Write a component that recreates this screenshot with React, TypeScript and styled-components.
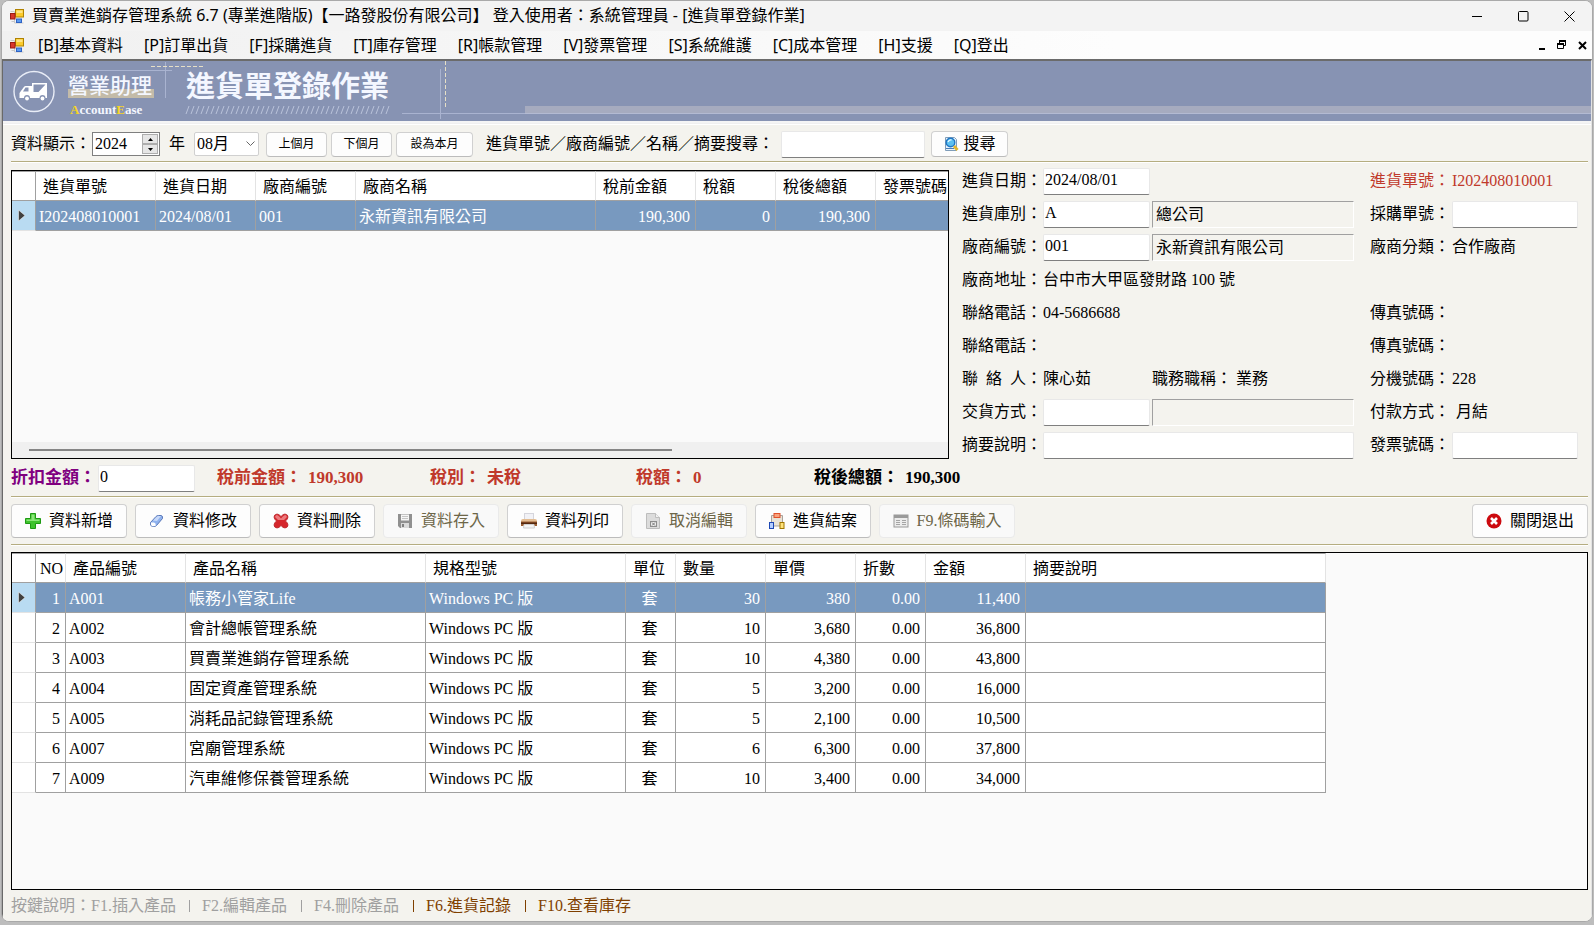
import React from 'react';
import styled, { createGlobalStyle, css } from 'styled-components';

const uiFont = '"Noto Sans", "Noto Sans CJK TC", sans-serif';
const formFont = '"Liberation Serif", "Noto Sans CJK TC", serif';

const color = {
  surface: '#f4f3ee',
  banner: '#8793b3',
  rule: '#b5ad80',
  grid: '#a0a0a0',
  selected: '#7899bf',
  red: '#c0392b',
  purple: '#800080',
  brown: '#804000',
  muted: '#a0a0a0',
};

const GlobalStyle = createGlobalStyle`
  *, *::before, *::after { box-sizing: border-box; }
  body { margin: 0; background: #bdbdbd; }
  button, input, select { font: inherit; color: inherit; margin: 0; }
`;

const Window = styled.div`
  display: flex;
  flex-direction: column;
  min-height: calc(100vh - 3px);
  margin: 0 1px;
  border: 1px solid #a9a9a9;
  border-radius: 8px;
  overflow: hidden;
  background: #f3f3f3;
  font: 400 16px/20px ${formFont};
  color: #000;
`;

const TitleBar = styled.header`
  display: flex;
  align-items: center;
  height: 30px;
  padding-left: 8px;
  font: 400 16px/20px ${uiFont};
  background: #f3f3f3;
`;

const TitleText = styled.h1`
  flex: 1;
  margin: 0 0 0 7px;
  padding-bottom: 2px;
  font: inherit;
  white-space: pre;
`;

const CaptionButtons = styled.div`
  display: flex;
`;

const CaptionButton = styled.button<{ $small?: boolean }>`
  display: flex;
  align-items: center;
  justify-content: center;
  width: ${p => (p.$small ? 20 : 46)}px;
  height: ${p => (p.$small ? 20 : 30)}px;
  padding: 0;
  border: 0;
  background: transparent;
`;

const MenuBar = styled.nav`
  display: flex;
  align-items: center;
  height: 28px;
  padding-left: 8px;
  background: linear-gradient(90deg, #f0f0f0, #fdfdfd 70%);
  font: 400 16px/20px ${uiFont};
`;

const MenuList = styled.ul`
  flex: 1;
  display: flex;
  gap: 21px;
  margin: 0 0 0 13px;
  padding: 0;
  list-style: none;
`;

const MenuLink = styled.a`
  color: #000;
  text-decoration: none;
  white-space: nowrap;
`;

const Workspace = styled.div`
  flex: 1;
  display: flex;
  flex-direction: column;
  border-top: 2px solid #6b6b6b;
  border-left: 1px solid #696969;
  border-right: 1px solid #e3e3e3;
  background: ${color.surface};
`;

const Banner = styled.div`
  position: relative;
  display: flex;
  height: 60px;
  background: ${color.banner};
  color: #f4f7ff;

  &::after {
    content: '';
    position: absolute;
    left: 522px;
    right: 0;
    bottom: 7px;
    height: 8px;
    background: #a6abbf;
    border-bottom: 1px solid #b3bad2;
  }
`;

const BannerArt = styled.svg`
  position: absolute;
  left: 0;
  top: 0;
`;

const Brand = styled.div`
  position: relative;
  width: 86px;
  margin-left: 65px;
  padding-top: 13px;
`;

const BrandName = styled.div`
  font-size: 21px;
  line-height: 24px;
  font-weight: 500;
  white-space: nowrap;
  background: linear-gradient(transparent 15px, #c3bba9 15px);
`;

const BrandSub = styled.div`
  padding: 4px 0 0 2px;
  font: bold 13px/15px "Liberation Serif", serif;

  b { color: #f5d327; }
`;

const BannerTitle = styled.h2`
  position: relative;
  margin: 0 0 0 32px;
  padding-top: 10px;
  font: bold 29px/32px ${formFont};
  white-space: nowrap;
`;

const Edge = styled.div`
  height: 4px;
  background: #f0f0f0;
  border-top: 2px solid #f5f5f5;
  border-bottom: 1px solid #fff;
`;

const Content = styled.main`
  flex: 1;
  display: flex;
  flex-direction: column;
  padding: 0 3px 0 8px;
`;

const Rule = styled.hr`
  flex: none;
  width: 100%;
  height: 2px;
  margin: 0;
  border: 0;
  border-top: 1px solid ${color.rule};
  background: #fff;
`;

const FilterBar = styled.form`
  display: flex;
  align-items: center;
  height: 36px;
  padding-top: 2px;
`;

const FilterLabel = styled.label<{ $gap?: number }>`
  margin: 0 ${p => p.$gap ?? 0}px;
  white-space: nowrap;
`;

const Spinner = styled.div`
  display: flex;
  width: 68px;
  height: 24px;
  margin-left: 1px;
  border: 1px solid #7f7f7f;
  background: #fff;
`;

const YearInput = styled.input`
  flex: 1;
  min-width: 0;
  padding: 0 0 0 2px;
  border: 0;
  background: transparent;
  appearance: textfield;

  &::-webkit-inner-spin-button { appearance: none; }
`;

const SpinButtons = styled.div`
  display: flex;
  flex-direction: column;
  width: 18px;
  padding: 1px;
`;

const SpinButton = styled.button`
  flex: 1;
  display: flex;
  align-items: center;
  justify-content: center;
  padding: 0;
  border: 1px solid #adadad;
  background: #e6e6e6;
`;

const SelectWrap = styled.div`
  display: grid;
  align-items: center;
  width: 65px;
  height: 24px;

  > * { grid-area: 1 / 1; }
  svg { justify-self: end; margin-right: 4px; pointer-events: none; }
`;

const MonthSelect = styled.select`
  width: 100%;
  height: 100%;
  padding: 0 0 0 2px;
  border: 1px solid #d0d0d0;
  border-radius: 2px;
  background: #fff;
  appearance: none;
`;

const MonthButtons = styled.div`
  display: flex;
  gap: 4px;
  margin: 0 13px 0 7px;
`;

const Button = styled.button<{ $kind: 'mini' | 'search' | 'action'; $wide?: boolean }>`
  display: flex;
  align-items: center;
  justify-content: center;
  padding: 0;
  white-space: nowrap;
  background: #fdfdfd;
  border: 1px solid #d0d0d0;
  border-bottom-color: #bcbcbc;
  border-radius: 4px;

  ${p => p.$kind === 'mini' && css`
    width: ${p.$wide ? 77 : 61}px;
    height: 25px;
    font-size: 12px;
  `}
  ${p => p.$kind === 'search' && css`
    width: 77px;
    height: 26px;
    gap: 5px;
  `}
  ${p => p.$kind === 'action' && css`
    width: ${p.$wide ? 136 : 116}px;
    height: 34px;
    gap: 8px;
  `}

  &:disabled {
    color: #6d6648;
    background: #f9f9f9;
    border-color: #eaeaea;
  }
`;

const TextInput = styled.input<{ $width?: number }>`
  width: ${p => (p.$width ? `${p.$width}px` : '100%')};
  height: 27px;
  padding: 0 1px 3px;
  border: 1px solid #e8e8e8;
  border-bottom-color: #7f7f7f;
  border-radius: 2px;
  background: #fff;
`;

const SearchInput = styled(TextInput)`
  margin: 0 6px 0 7px;
`;

const Upper = styled.div`
  display: grid;
  grid-template-columns: minmax(0, 938fr) minmax(0, 626fr);
  column-gap: 13px;
  height: 299px;
`;

const GridBox = styled.div<{ $fill?: boolean }>`
  display: flex;
  flex-direction: column;
  min-width: 0;
  border: 1px solid #000;
  background: #fafafa;
  overflow: hidden;
  ${p => (p.$fill ? 'flex: 1; margin-top: 6px;' : 'height: 289px; margin-top: 7px;')}
`;

const Table = styled.table<{ $width: number }>`
  width: ${p => p.$width}px;
  table-layout: fixed;
  border-collapse: separate;
  border-spacing: 0;
`;

const HeadCell = styled.th<{ $corner?: boolean }>`
  height: 30px;
  padding: 2px 0 0 7px;
  border-top: 1px solid ${color.grid};
  border-bottom: 1px solid ${color.grid};
  border-right: 1px solid ${p => (p.$corner ? color.grid : '#e3e3e3')};
  background: #fff;
  font-weight: inherit;
  text-align: left;
  white-space: nowrap;
`;

const NumberHead = styled(HeadCell)`
  padding-left: 4px;
`;

const Row = styled.tr<{ $selected?: boolean }>`
  background: ${p => (p.$selected ? color.selected : '#fff')};
  color: ${p => (p.$selected ? '#fff' : '#000')};
`;

const Cell = styled.td<{ $align?: string }>`
  height: 30px;
  padding: 2px 5px 0 3px;
  border-right: 1px solid ${color.grid};
  border-bottom: 1px solid ${color.grid};
  text-align: ${p => p.$align ?? 'left'};
  white-space: nowrap;
`;

const RowMarker = styled.td<{ $selected?: boolean }>`
  padding: 0 0 0 6px;
  border-right: 1px solid ${color.grid};
  border-bottom: 1px solid #e3e3e3;
  background: ${p => (p.$selected ? '#b9dbf2' : '#fff')};

  svg { display: block; }
`;

const ScrollTrack = styled.div`
  display: flex;
  align-items: center;
  height: 16px;
  margin-top: auto;
  padding-left: 17px;
  background: #f0f0f0;
`;

const ScrollThumb = styled.div`
  width: 70%;
  height: 2px;
  background: #858585;
`;

const Details = styled.div`
  display: grid;
  grid-template-columns: 81px 107px minmax(0, 1fr) 82px 126px;
  grid-auto-rows: 33px;
  align-items: center;
  margin-top: 2px;
  padding-right: 10px;
`;

const Name = styled.label<{ $red?: boolean }>`
  padding-bottom: 2px;
  color: ${p => (p.$red ? color.red : 'inherit')};
  white-space: pre;
`;

const SpacedName = styled.label`
  display: flex;
  justify-content: space-between;
  width: 80px;
  padding-bottom: 2px;
`;

const Value = styled.output<{ $span?: number; $red?: boolean }>`
  grid-column: span ${p => p.$span ?? 1};
  padding-bottom: 2px;
  color: ${p => (p.$red ? color.red : 'inherit')};
  white-space: nowrap;
`;

const WideField = styled.div`
  grid-column: span 2;
  padding-right: 16px;
`;

const Linked = styled.output`
  height: 27px;
  margin: 0 16px 0 2px;
  padding: 3px;
  border: 1px solid #fff;
  border-top-color: #a0a0a0;
  border-left-color: #a0a0a0;
  white-space: nowrap;
`;

const JobTitle = styled.div`
  padding: 0 0 2px 2px;
`;

const Totals = styled.div`
  display: grid;
  grid-template-columns: 87px 119px 213px 206px 178px 1fr;
  align-items: center;
  height: 34px;
  padding-bottom: 2px;
  font-size: 17px;
  font-weight: bold;
`;

const DiscountLabel = styled.label`
  color: ${color.purple};
  white-space: nowrap;
`;

const DiscountInput = styled(TextInput)`
  font-size: 16px;
  font-weight: 400;
`;

const Total = styled.div<{ $dark?: boolean }>`
  display: flex;
  gap: 6px;
  color: ${p => (p.$dark ? '#000' : color.red)};
  white-space: nowrap;
`;

const Actions = styled.div`
  display: flex;
  align-items: center;
  gap: 8px;
  height: 46px;
`;

const Spacer = styled.div`
  flex: 1;
`;

const KeyHints = styled.footer`
  display: flex;
  align-items: center;
  height: 31px;
  padding-top: 1px;
  color: ${color.brown};
  white-space: nowrap;
`;

const KeyHint = styled.span<{ $off?: boolean; $first?: boolean }>`
  min-width: ${p => (p.$first ? 167 : 88)}px;
  color: ${p => (p.$off ? color.muted : color.brown)};
`;

const KeyBar = styled.span<{ $off?: boolean }>`
  width: 1px;
  height: 12px;
  margin: 0 12px 0 11px;
  background: ${p => (p.$off ? color.muted : color.brown)};
`;

const AppIcon = () => (
  <svg width="15" height="15" viewBox="0 0 15 15" aria-hidden="true">
    <path d="M.5 2.500h4v11.500h9M1.500 12.500h3" fill="none" stroke="#c9c9c9" />
    <rect x="5.500" y="0.500" width="8" height="7.500" fill="#fbcb2c" stroke="#b08200" />
    <path d="M6.500 1.500h6v2.500h-6z" fill="#fde488" />
    <rect x="0.500" y="4.500" width="4.500" height="5.500" fill="#d8362c" stroke="#9c1c14" />
    <rect x="6.500" y="10" width="5" height="3.500" fill="#5b9af0" stroke="#2d62c4" />
  </svg>
);

const Mark = () => (
  <svg width="7" height="11" viewBox="0 0 7 11" aria-hidden="true">
    <path d="M0.500 0 7 5.500 0.500 11Z" fill="#404040" stroke="#fff" strokeWidth="0.500" />
  </svg>
);

const AddIcon = () => (
  <svg width="16" height="16" viewBox="0 0 16 16" aria-hidden="true">
    <path d="M5.500 .5h5v5h5v5h-5v5h-5v-5h-5v-5h5z" fill="#3fc32e" stroke="#1d9a12" />
    <path d="M6.500 1.500h3v5h5v1.500h-13V6.500h5z" fill="#8ce67a" />
  </svg>
);

const EraserIcon = () => (
  <svg width="16" height="16" viewBox="0 0 16 16" aria-hidden="true">
    <path d="M1.500 9.500 7 3.500Q8 2.500 9.500 2.500H12Q14 2.700 13.500 5.500L7.500 12.500Q6.500 13.500 5 13.500H3.500Q1 13.200 1.500 9.500Z" fill="#8fb2ee" stroke="#5a78b8" />
    <path d="M2 9.500H5Q7 10 6.800 12.500Q6 13.200 5 13.200H3.500Q1.500 12.800 2 9.500Z" fill="#fff" />
    <path d="M4 7.500 8 3.500Q8.500 3 9.500 3H12L8 8Z" fill="#c8dafa" />
  </svg>
);

const DeleteIcon = () => (
  <svg width="16" height="16" viewBox="0 0 16 16" aria-hidden="true">
    <path d="M1 4Q1 1.500 4 1Q6 1 8 3.500Q10 1 12 1Q15 1.500 15 4Q15 6 12.500 8Q15 10 15 12Q15 14.500 12 15Q10 15 8 12.500Q6 15 4 15Q1 14.500 1 12Q1 10 3.500 8Q1 6 1 4Z" fill="#d5262c" stroke="#b8242a" strokeWidth="0.800" />
    <path d="M2 4Q2.500 2.200 4 2Q6 2.500 8 5.500Q10 2.500 12 2Q13.500 2.200 14 4L11 7H5Z" fill="#ec7a7d" />
  </svg>
);

const SaveIcon = () => (
  <svg width="16" height="16" viewBox="0 0 16 16" aria-hidden="true">
    <path d="M1 1h14v14H3l-2-2z" fill="#909090" />
    <rect x="4" y="1.500" width="8" height="6" fill="#f5f5f5" />
    <path d="M5 3.500h6M5 5.500h6" stroke="#c4c4c4" />
    <rect x="4" y="10" width="8" height="5" fill="#dadada" />
    <rect x="5" y="11" width="2" height="3" fill="#808080" />
  </svg>
);

const PrintIcon = () => (
  <svg width="16" height="16" viewBox="0 0 16 16" aria-hidden="true">
    <rect x="3.500" y="0.500" width="9" height="7" fill="#f2f2f6" stroke="#d5d5dc" />
    <path d="M0 8Q0 6 2 6h12q2 0 2 2v1H0z" fill="#e3bd93" />
    <path d="M0 8.500h16V13H0z" fill="#9b5f33" />
    <path d="M0 9.500h16v1.500H0z" fill="#54270e" />
    <path d="M3 11.500h10l.5 3.500h-11z" fill="#f4f4f4" stroke="#d0d0d0" />
  </svg>
);

const CancelDocIcon = () => (
  <svg width="16" height="16" viewBox="0 0 16 16" aria-hidden="true">
    <path d="M1.500 .5h9l4 4v11h-13z" fill="#dcdcdc" stroke="#bdbdbd" />
    <path d="M10.500 .5v4h4" fill="#f2f2f2" stroke="#bdbdbd" />
    <rect x="5.500" y="8.500" width="6" height="5" fill="#ececec" stroke="#8d8d8d" />
    <path d="M7 9.500 10 12.500M10 9.500 7 12.500" stroke="#777" />
  </svg>
);

const CloseCaseIcon = () => (
  <svg width="16" height="16" viewBox="0 0 16 16" aria-hidden="true">
    <path d="M2.500 2.500h11v10.500h-11z" fill="#e9e3d6" stroke="#a9a39c" />
    <rect x="5" y="0.500" width="6" height="4" fill="#f9a27c" stroke="#e0512a" />
    <rect x="0.500" y="9.500" width="4" height="6" fill="#b5ceff" stroke="#1d48b4" />
    <rect x="11" y="9.500" width="4" height="6" fill="#ffe37c" stroke="#a07600" />
  </svg>
);

const BarcodeIcon = () => (
  <svg width="16" height="16" viewBox="0 0 16 16" aria-hidden="true">
    <rect x="1" y="2" width="14" height="12" fill="#ececec" stroke="#9a9a9a" />
    <path d="M1 2h14v3H1z" fill="#9a9a9a" />
    <path d="M3 7.500h4M9 7.500h4M3 9.500h4M9 9.500h4M3 11.500h4M9 11.500h4" stroke="#a5a5a5" />
  </svg>
);

const ExitIcon = () => (
  <svg width="16" height="16" viewBox="0 0 16 16" aria-hidden="true">
    <circle cx="8" cy="8" r="7.500" fill="#cc0a0f" />
    <path d="M5 5 11 11M11 5 5 11" stroke="#fff" strokeWidth="2.600" />
  </svg>
);

const FindIcon = () => (
  <svg width="15" height="16" viewBox="0 0 15 16" aria-hidden="true">
    <path d="M1.500 1.500h9l2 2v11h-11z" fill="#e9f3fb" stroke="#7f9db9" />
    <path d="M2 12.500h8" stroke="#4a7db5" />
    <circle cx="6.500" cy="6.500" r="4.300" fill="#5cc0f0" stroke="#2277c4" strokeWidth="1.400" />
    <path d="M4 6Q5 3.500 7.500 4" fill="none" stroke="#e5f8ff" strokeWidth="1.400" />
    <path d="M10 10 13.500 14" stroke="#e2b62c" strokeWidth="2.800" />
  </svg>
);

const BannerDrawing = () => (
  <BannerArt width="540" height="60" viewBox="0 0 540 60" aria-hidden="true">
    <circle cx="31" cy="30.500" r="20" fill="none" stroke="#e9edf7" strokeWidth="1.400" />
    <path
      fillRule="evenodd"
      fill="#fff"
      d="M29 22h15v15h-1.500a3 3 0 0 0-6 0H27a3 3 0 0 0-6 0h-4.500v-5l4-5.500q.6-1.500 2-1.500H29zM22.500 26.500l-2.500 4h5.500v-4zM30.500 23.500v7.500h5l7-7.500z"
    />
    <circle cx="24" cy="37.500" r="1.900" fill="#fff" />
    <circle cx="39.500" cy="37.500" r="1.900" fill="#fff" />
    <g fill="none" stroke="#a9b3d0">
      <path d="M66 9.500H169M162.500 1V37M399 52.500H522M437.500 8V58" />
    </g>
    <path d="M148 5.500H201M442.500 0V48" fill="none" stroke="#e6dfc6" strokeDasharray="4 2" />
    <g stroke="#b9c2da">
      {Array.from({ length: 41 }, (_, i) => (
        <path key={i} d={`M${183 + i * 5} 53l3-8`} />
      ))}
    </g>
  </BannerArt>
);

const menus = [
  '[B]基本資料', '[P]訂單出貨', '[F]採購進貨', '[T]庫存管理', '[R]帳款管理',
  '[V]發票管理', '[S]系統維護', '[C]成本管理', '[H]支援', '[Q]登出',
];

const orderCols = [
  { label: '進貨單號', width: 120 },
  { label: '進貨日期', width: 100 },
  { label: '廠商編號', width: 100 },
  { label: '廠商名稱', width: 240 },
  { label: '稅前金額', width: 100, align: 'right' },
  { label: '稅額', width: 80, align: 'right' },
  { label: '稅後總額', width: 100, align: 'right' },
  { label: '發票號碼', width: 100 },
];

const orders = [
  ['I202408010001', '2024/08/01', '001', '永新資訊有限公司', '190,300', '0', '190,300', ''],
];

const itemCols = [
  { label: 'NO', width: 30, align: 'right' },
  { label: '產品編號', width: 120 },
  { label: '產品名稱', width: 240 },
  { label: '規格型號', width: 200 },
  { label: '單位', width: 50, align: 'center' },
  { label: '數量', width: 90, align: 'right' },
  { label: '單價', width: 90, align: 'right' },
  { label: '折數', width: 70, align: 'right' },
  { label: '金額', width: 100, align: 'right' },
  { label: '摘要說明', width: 300 },
];

const items = [
  ['1', 'A001', '帳務小管家Life', 'Windows PC 版', '套', '30', '380', '0.00', '11,400', ''],
  ['2', 'A002', '會計總帳管理系統', 'Windows PC 版', '套', '10', '3,680', '0.00', '36,800', ''],
  ['3', 'A003', '買賣業進銷存管理系統', 'Windows PC 版', '套', '10', '4,380', '0.00', '43,800', ''],
  ['4', 'A004', '固定資產管理系統', 'Windows PC 版', '套', '5', '3,200', '0.00', '16,000', ''],
  ['5', 'A005', '消耗品記錄管理系統', 'Windows PC 版', '套', '5', '2,100', '0.00', '10,500', ''],
  ['6', 'A007', '宮廟管理系統', 'Windows PC 版', '套', '6', '6,300', '0.00', '37,800', ''],
  ['7', 'A009', '汽車維修保養管理系統', 'Windows PC 版', '套', '10', '3,400', '0.00', '34,000', ''],
];

type Column = { label: string; width: number; align?: string };

const DataTable = ({ cols, rows }: { cols: Column[]; rows: string[][] }) => (
  <Table $width={cols.reduce((sum, c) => sum + c.width, 24)}>
    <colgroup>
      <col width={24} />
      {cols.map(c => <col key={c.label} width={c.width} />)}
    </colgroup>
    <thead>
      <tr>
        <HeadCell $corner />
        {cols.map(c => {
          const Head = c.label === 'NO' ? NumberHead : HeadCell;
          return <Head key={c.label} scope="col">{c.label}</Head>;
        })}
      </tr>
    </thead>
    <tbody>
      {rows.map((row, r) => (
        <Row key={row[0]} $selected={r === 0}>
          <RowMarker $selected={r === 0}>{r === 0 && <Mark />}</RowMarker>
          {row.map((text, i) => <Cell key={cols[i].label} $align={cols[i].align}>{text}</Cell>)}
        </Row>
      ))}
    </tbody>
  </Table>
);

const actions = [
  { label: '資料新增', icon: <AddIcon /> },
  { label: '資料修改', icon: <EraserIcon /> },
  { label: '資料刪除', icon: <DeleteIcon /> },
  { label: '資料存入', icon: <SaveIcon />, off: true },
  { label: '資料列印', icon: <PrintIcon /> },
  { label: '取消編輯', icon: <CancelDocIcon />, off: true },
  { label: '進貨結案', icon: <CloseCaseIcon /> },
  { label: 'F9.條碼輸入', icon: <BarcodeIcon />, off: true, wide: true },
];

export default function App() {
  return (
    <>
      <GlobalStyle />
      <Window>
        <TitleBar>
          <AppIcon />
          <TitleText>買賣業進銷存管理系統 6.7 (專業進階版)【一路發股份有限公司】 登入使用者：系統管理員 - [進貨單登錄作業]</TitleText>
          <CaptionButtons>
            <CaptionButton aria-label="最小化">
              <svg width="11" height="11"><path d="M0 5.500h10" stroke="#000" /></svg>
            </CaptionButton>
            <CaptionButton aria-label="最大化">
              <svg width="11" height="11"><rect x="0.500" y="0.500" width="9.500" height="9.500" rx="1" fill="none" stroke="#000" /></svg>
            </CaptionButton>
            <CaptionButton aria-label="關閉">
              <svg width="11" height="11"><path d="M.5 .5 10.500 10.500M10.500 .5 .5 10.500" stroke="#000" /></svg>
            </CaptionButton>
          </CaptionButtons>
        </TitleBar>
        <MenuBar>
          <AppIcon />
          <MenuList>
            {menus.map(m => <li key={m}><MenuLink href="#">{m}</MenuLink></li>)}
          </MenuList>
          <CaptionButtons>
            <CaptionButton $small aria-label="子視窗最小化">
              <svg width="9" height="9"><path d="M1 8h6" stroke="#000" strokeWidth="2" /></svg>
            </CaptionButton>
            <CaptionButton $small aria-label="子視窗還原">
              <svg width="10" height="10">
                <path d="M2.500 3V1h6v4.500H7M.5 4h6v4.500h-6z" fill="none" stroke="#000" />
                <path d="M2 1h7M0 4h7" stroke="#000" strokeWidth="2" />
              </svg>
            </CaptionButton>
            <CaptionButton $small aria-label="子視窗關閉">
              <svg width="9" height="9"><path d="M1 1 8 8M8 1 1 8" stroke="#000" strokeWidth="2" /></svg>
            </CaptionButton>
          </CaptionButtons>
        </MenuBar>
        <Workspace>
          <Banner>
            <BannerDrawing />
            <Brand>
              <BrandName>營業助理</BrandName>
              <BrandSub><b>A</b>ccount<b>E</b>ase</BrandSub>
            </Brand>
            <BannerTitle>進貨單登錄作業</BannerTitle>
          </Banner>
          <Edge />
          <Content>
            <FilterBar onSubmit={e => e.preventDefault()}>
              <FilterLabel htmlFor="year">資料顯示：</FilterLabel>
              <Spinner>
                <YearInput id="year" type="number" defaultValue={2024} />
                <SpinButtons>
                  <SpinButton type="button" aria-label="加一年">
                    <svg width="5" height="3"><path d="M0 3 2.500 0 5 3z" /></svg>
                  </SpinButton>
                  <SpinButton type="button" aria-label="減一年">
                    <svg width="5" height="3"><path d="M0 0h5L2.500 3z" /></svg>
                  </SpinButton>
                </SpinButtons>
              </Spinner>
              <FilterLabel htmlFor="month" $gap={9}>年</FilterLabel>
              <SelectWrap>
                <MonthSelect id="month" defaultValue="08月">
                  <option>08月</option>
                </MonthSelect>
                <svg width="9" height="6"><path d="M.5 .5 4.500 4.500 8.500 .5" fill="none" stroke="#666" /></svg>
              </SelectWrap>
              <MonthButtons>
                <Button type="button" $kind="mini">上個月</Button>
                <Button type="button" $kind="mini">下個月</Button>
                <Button type="button" $kind="mini" $wide>設為本月</Button>
              </MonthButtons>
              <FilterLabel htmlFor="keyword">進貨單號／廠商編號／名稱／摘要搜尋：</FilterLabel>
              <SearchInput id="keyword" $width={144} />
              <Button $kind="search"><FindIcon />搜尋</Button>
            </FilterBar>
            <Rule />
            <Upper>
              <GridBox>
                <DataTable cols={orderCols} rows={orders} />
                <ScrollTrack><ScrollThumb /></ScrollTrack>
              </GridBox>
              <Details>
                <Name htmlFor="date">進貨日期：</Name>
                <TextInput id="date" defaultValue="2024/08/01" />
                <span />
                <Name htmlFor="orderNo" $red>進貨單號：</Name>
                <Value id="orderNo" $red>I202408010001</Value>

                <Name htmlFor="store">進貨庫別：</Name>
                <TextInput id="store" defaultValue="A" />
                <Linked>總公司</Linked>
                <Name htmlFor="purchaseNo">採購單號：</Name>
                <TextInput id="purchaseNo" />

                <Name htmlFor="vendor">廠商編號：</Name>
                <TextInput id="vendor" defaultValue="001" />
                <Linked>永新資訊有限公司</Linked>
                <Name htmlFor="vendorKind">廠商分類：</Name>
                <Value id="vendorKind">合作廠商</Value>

                <Name htmlFor="address">廠商地址：</Name>
                <Value id="address" $span={4}>台中市大甲區發財路 100 號</Value>

                <Name htmlFor="phone1">聯絡電話：</Name>
                <Value id="phone1" $span={2}>04-5686688</Value>
                <Name htmlFor="fax1">傳真號碼：</Name>
                <Value id="fax1" />

                <Name htmlFor="phone2">聯絡電話：</Name>
                <Value id="phone2" $span={2} />
                <Name htmlFor="fax2">傳真號碼：</Name>
                <Value id="fax2" />

                <SpacedName htmlFor="contact">
                  <span>聯</span><span>絡</span><span>人：</span>
                </SpacedName>
                <Value id="contact">陳心茹</Value>
                <JobTitle>
                  <label htmlFor="job">職務職稱： </label>
                  <output id="job">業務</output>
                </JobTitle>
                <Name htmlFor="ext">分機號碼：</Name>
                <Value id="ext">228</Value>

                <Name htmlFor="delivery">交貨方式：</Name>
                <TextInput id="delivery" />
                <Linked />
                <Name htmlFor="payment">付款方式：</Name>
                <Value id="payment">&nbsp;月結</Value>

                <Name htmlFor="memo">摘要說明：</Name>
                <WideField><TextInput id="memo" /></WideField>
                <Name htmlFor="invoice">發票號碼：</Name>
                <TextInput id="invoice" />
              </Details>
            </Upper>
            <Totals>
              <DiscountLabel htmlFor="discount">折扣金額：</DiscountLabel>
              <DiscountInput id="discount" $width={97} defaultValue="0" />
              <Total><span>稅前金額：</span><span>190,300</span></Total>
              <Total><span>稅別：</span><span>未稅</span></Total>
              <Total><span>稅額：</span><span>0</span></Total>
              <Total $dark><span>稅後總額：</span><span>190,300</span></Total>
            </Totals>
            <Rule />
            <Actions>
              {actions.map(a => (
                <Button key={a.label} type="button" $kind="action" $wide={a.wide} disabled={a.off}>
                  {a.icon}{a.label}
                </Button>
              ))}
              <Spacer />
              <Button type="button" $kind="action"><ExitIcon />關閉退出</Button>
            </Actions>
            <Rule />
            <GridBox $fill>
              <DataTable cols={itemCols} rows={items} />
            </GridBox>
            <KeyHints>
              <KeyHint $off $first>按鍵說明：F1.插入產品</KeyHint>
              <KeyBar $off />
              <KeyHint $off>F2.編輯產品</KeyHint>
              <KeyBar $off />
              <KeyHint $off>F4.刪除產品</KeyHint>
              <KeyBar />
              <KeyHint>F6.進貨記錄</KeyHint>
              <KeyBar />
              <KeyHint>F10.查看庫存</KeyHint>
            </KeyHints>
          </Content>
        </Workspace>
      </Window>
    </>
  );
}
